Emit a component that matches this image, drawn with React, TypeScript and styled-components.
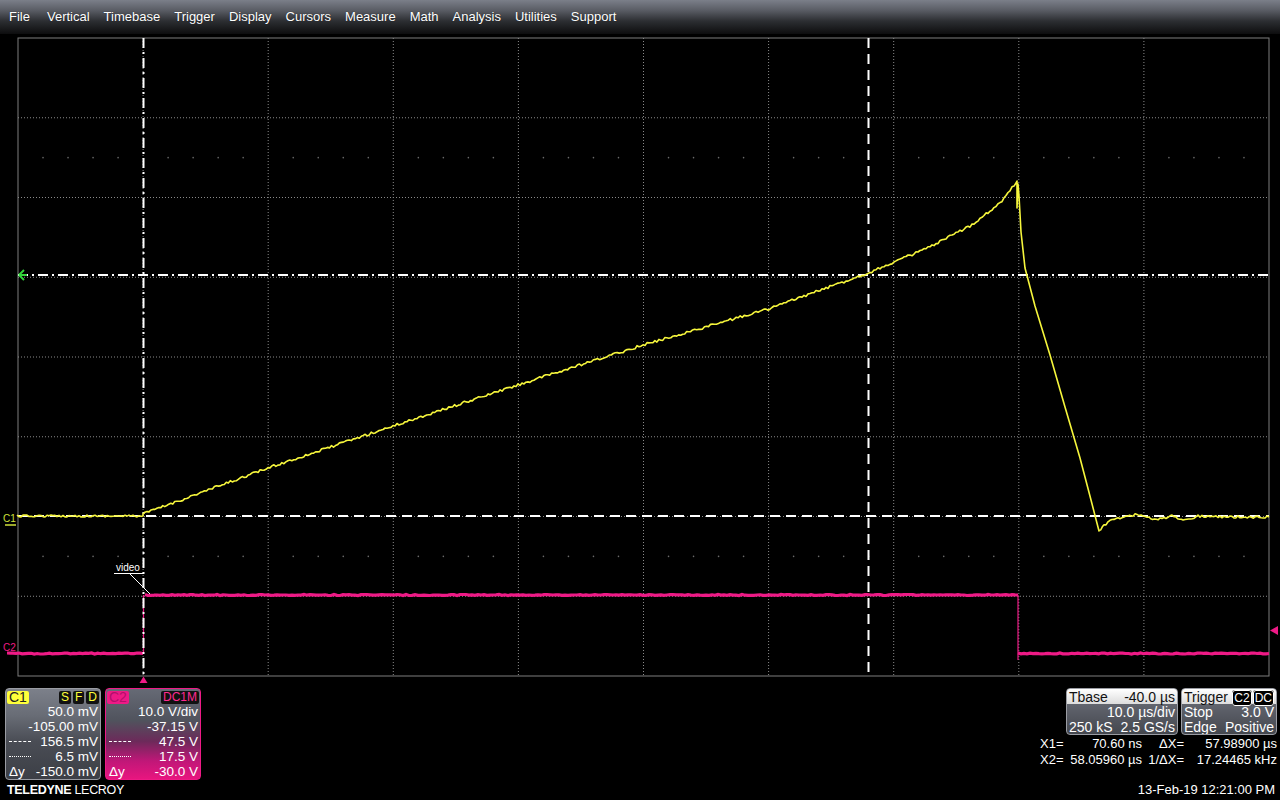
import React from 'react'
import styled, { createGlobalStyle } from 'styled-components'

const GlobalStyle = createGlobalStyle`
  html, body {
    margin: 0;
    padding: 0;
    background: #000;
  }
`

const C1 = '#f6f63c'
const C2 = '#ee1a86'

const Page = styled.div`
  width: 1280px;
  height: 800px;
  background: #000;
  display: flex;
  flex-direction: column;
  overflow: hidden;
  font-family: 'Liberation Sans', Arial, sans-serif;
  color: #fff;
`

const MenuBar = styled.div`
  height: 34px;
  flex-shrink: 0;
  display: flex;
  align-items: center;
  gap: 14px;
  padding: 0 0 1px 9px;
  box-sizing: border-box;
  background: linear-gradient(180deg, #7b7f89 0%, #5a5d65 30%, #2c2e32 62%, #0d0d0e 100%);
  font-size: 13px;
`

const MenuItem = styled.span`
  color: #fff;
  text-shadow: 0 0 1px rgba(0, 0, 0, 0.6);
  &:first-child {
    margin-right: 3px;
  }
`

const Screen = styled.svg`
  display: block;
  flex-shrink: 0;
  width: 1280px;
  height: 650px;
`

const BottomBar = styled.div`
  flex: 1;
  display: flex;
  justify-content: space-between;
  padding: 4px 3px 0 5px;
`

const LeftGroup = styled.div`
  display: flex;
  flex-direction: column;
`

const ChannelRow = styled.div`
  display: flex;
  gap: 4px;
`

const ChannelBox = styled.div<{ $ch: 'c1' | 'c2' }>`
  width: 96px;
  height: 92px;
  box-sizing: border-box;
  border-radius: 4px;
  border: 1px solid ${p => (p.$ch === 'c1' ? '#9a9ca3' : C2)};
  background: ${p =>
    p.$ch === 'c1'
      ? 'linear-gradient(180deg, #7c808a 0%, #686c75 30%, #4a4d55 58%, #3c3f46 100%)'
      : 'linear-gradient(180deg, #666a75 0%, #50535d 35%, #6c2a5a 58%, #c01778 80%, #e8157f 100%)'};
  overflow: hidden;
  display: flex;
  flex-direction: column;
`

const BoxHeader = styled.div`
  height: 15px;
  display: flex;
  align-items: center;
  justify-content: space-between;
  padding: 1px 1px 0 1px;
`

const Tag = styled.span<{ $bg: string; $fg: string; $size?: number }>`
  background: ${p => p.$bg};
  color: ${p => p.$fg};
  font-size: ${p => p.$size ?? 14}px;
  line-height: 13px;
  padding: 0 2px;
  border-radius: 2px;
`

const TagGroup = styled.div`
  display: flex;
  gap: 2px;
`

const ValueRow = styled.div`
  height: 15.5px;
  display: flex;
  align-items: center;
  justify-content: space-between;
  padding: 0 2px 0 3px;
  font-size: 13.5px;
  line-height: 15px;
`

const LineKey = styled.span<{ $kind: 'dashed' | 'dotted' }>`
  display: inline-block;
  width: 22px;
  height: 0;
  border-top: 1px ${p => p.$kind} #fff;
`

const Logo = styled.div`
  margin-top: 3px;
  margin-left: 2px;
  font-size: 12.5px;
  letter-spacing: -0.3px;
  color: #fff;
  b {
    font-weight: 700;
  }
`

const RightGroup = styled.div`
  display: flex;
  flex-direction: column;
  align-items: flex-end;
`

const InfoRow = styled.div`
  display: flex;
  gap: 3px;
`

const InfoBox = styled.div<{ $w: number }>`
  width: ${p => p.$w}px;
  height: 47px;
  box-sizing: border-box;
  border: 1px solid #9a9ca3;
  border-radius: 4px;
  overflow: hidden;
  background: linear-gradient(180deg, #72767f 0%, #5a5d66 50%, #44474e 100%);
`

const InfoHeader = styled.div`
  height: 15px;
  display: flex;
  align-items: center;
  justify-content: space-between;
  padding: 0 2px;
  background: linear-gradient(180deg, #ffffff 0%, #dcdcdc 100%);
  color: #111;
  font-size: 14px;
`

const InfoLine = styled.div<{ $end?: boolean }>`
  height: 15.5px;
  display: flex;
  align-items: center;
  justify-content: ${p => (p.$end ? 'flex-end' : 'space-between')};
  padding: 0 2px;
  font-size: 14px;
`

const SrcTag = styled.span`
  background: #000;
  color: #fff;
  border: 1px solid #fff;
  border-radius: 3px;
  font-size: 12px;
  line-height: 11px;
  padding: 0 1px;
  margin-left: 1px;
`

const Readouts = styled.div`
  margin-top: 1px;
  display: grid;
  grid-template-columns: 20px 82px 42px 93px;
  font-size: 13px;
  line-height: 16px;
  span:nth-child(2n) {
    text-align: right;
  }
  span:nth-child(4n + 3) {
    text-align: right;
  }
`

const DateText = styled.div`
  margin-top: 14px;
  margin-right: 2px;
  font-size: 13px;
`

/* ---------- trace data ---------- */

function rng(seed: number) {
  let s = seed
  return () => {
    s = (s * 16807) % 2147483647
    return (s - 1) / 2147483646
  }
}

function interp(points: [number, number][], step: number, noise: number, r: () => number) {
  const out: string[] = []
  for (let i = 0; i < points.length - 1; i++) {
    const [x0, y0] = points[i]
    const [x1, y1] = points[i + 1]
    const n = Math.max(1, Math.round((x1 - x0) / step))
    for (let k = 0; k < n; k++) {
      const t = k / n
      const x = x0 + (x1 - x0) * t
      const y = y0 + (y1 - y0) * t + (r() - 0.5) * noise
      out.push(`${x.toFixed(1)},${y.toFixed(1)}`)
    }
  }
  const last = points[points.length - 1]
  out.push(`${last[0]},${last[1]}`)
  return out
}

function buildC1() {
  const r = rng(12345)
  const pre = interp([[17, 516], [143, 516]], 2, 2, r)
  const ramp = interp(
    [
      [143, 514], [268, 468], [393, 426], [518, 385], [643, 345], [768, 309],
      [868, 273], [930, 247], [970, 226], [1000, 203], [1016, 183],
    ],
    2,
    2.6,
    r,
  )
  const fall = [
    '1017,181', '1017,208', '1018,184', '1019,196', '1021,232', '1025,268',
    '1035,306', '1050,355', '1065,407', '1080,458', '1091,500', '1099,531',
  ]
  const settle = interp(
    [
      [1099, 531], [1104, 525], [1112, 520], [1124, 517], [1137, 514], [1147, 518],
      [1160, 519], [1172, 516], [1185, 520], [1198, 516], [1230, 517], [1269, 517],
    ],
    2,
    2.4,
    r,
  )
  return [...pre, ...ramp, ...fall, ...settle].join(' ')
}

function buildLevel(x0: number, x1: number, y: number, seed: number) {
  const r = rng(seed)
  return interp([[x0, y], [x1, y]], 3, 1, r).join(' ')
}

const c1Points = buildC1()
const c2Low1 = buildLevel(7, 143, 653.5, 77)
const c2High = buildLevel(145, 1018, 595, 91)
const c2Low2 = buildLevel(1018, 1269, 653.5, 113)

const GX0 = 18
const GX1 = 1269
const GY0 = 38
const GY1 = 676
const DX = (GX1 - GX0) / 10
const DY = (GY1 - GY0) / 8

const menu = ['File', 'Vertical', 'Timebase', 'Trigger', 'Display', 'Cursors', 'Measure', 'Math', 'Analysis', 'Utilities', 'Support']

function Graticule() {
  const dots: React.ReactNode[] = []
  ;[1.5, 6.5].forEach(row => {
    for (let k = 1; k < 50; k++) {
      if (k % 5 === 0) continue
      dots.push(
        <circle key={`${row}-${k}`} cx={GX0 + (k * DX) / 5} cy={GY0 + row * DY} r={0.8} fill="#6a6a6a" />,
      )
    }
  })
  return (
    <g>
      <rect x={GX0} y={GY0} width={GX1 - GX0} height={GY1 - GY0} fill="none" stroke="#7e7e7e" strokeWidth={1} />
      {Array.from({ length: 9 }, (_, i) => (
        <line
          key={`v${i}`}
          x1={GX0 + (i + 1) * DX}
          x2={GX0 + (i + 1) * DX}
          y1={GY0}
          y2={GY1}
          stroke="#8a8a8a"
          strokeWidth={1}
          strokeDasharray="1 2"
        />
      ))}
      {Array.from({ length: 7 }, (_, j) => (
        <line
          key={`h${j}`}
          x1={GX0}
          x2={GX1}
          y1={GY0 + (j + 1) * DY}
          y2={GY0 + (j + 1) * DY}
          stroke="#8a8a8a"
          strokeWidth={1}
          strokeDasharray="1 2"
        />
      ))}
      {dots}
    </g>
  )
}

function Cursors() {
  return (
    <g stroke="#fff" strokeWidth={2} fill="none">
      <line x1={143.5} x2={143.5} y1={GY0} y2={GY1} strokeDasharray="10 4 2 4" />
      <line x1={868.5} x2={868.5} y1={GY0} y2={GY1} strokeDasharray="10 6" />
      <line x1={GX0} x2={GX1} y1={275} y2={275} strokeDasharray="10 4 2 4" />
      <line x1={GX0} x2={GX1} y1={516} y2={516} strokeDasharray="10 6" />
    </g>
  )
}

function Markers() {
  return (
    <g fontFamily="'Liberation Sans', Arial, sans-serif">
      <path d="M19 275 L24 270 M19 275 L24 280 M19 275 H27" stroke="#33d43a" strokeWidth={2} fill="none" />
      <text x={3} y={522} fontSize={10} fill="#cfe03a">C1</text>
      <line x1={5} x2={16} y1={525} y2={525} stroke="#cfe03a" strokeWidth={1.5} />
      <text x={3} y={651} fontSize={10} fill={C2}>C2</text>
      <text x={116} y={571} fontSize={10} fill="#fff">video</text>
      <line x1={114} x2={143} y1={573.5} y2={573.5} stroke="#fff" strokeWidth={1} />
      <line x1={130} x2={150} y1={574} y2={594} stroke="#fff" strokeWidth={1} />
      <polygon points="139.5,683 143.5,676.5 147.5,683" fill={C2} />
      <polygon points="1270,630.5 1278,626 1278,635" fill={C2} />
    </g>
  )
}

export default function App() {
  return (
    <Page>
      <GlobalStyle />
      <MenuBar>
        {menu.map(m => (
          <MenuItem key={m}>{m}</MenuItem>
        ))}
      </MenuBar>

      <Screen viewBox="0 34 1280 650">
        <Graticule />
        <g stroke={C2} fill="none">
          <polyline points={c2Low1} strokeWidth={3.2} />
          <polyline points={c2High} strokeWidth={3.2} />
          <polyline points={c2Low2} strokeWidth={3.2} />
          <line x1={143.5} x2={143.5} y1={595} y2={654} strokeWidth={1.2} />
          <line x1={1018} x2={1018} y1={595} y2={660} strokeWidth={1.2} />
        </g>
        <Cursors />
        <polyline points={c1Points} stroke={C1} strokeWidth={1.6} fill="none" strokeLinejoin="round" />
        <Markers />
      </Screen>

      <BottomBar>
        <LeftGroup>
          <ChannelRow>
            <ChannelBox $ch="c1">
              <BoxHeader>
                <Tag $bg="#ffff3a" $fg="#222">C1</Tag>
                <TagGroup>
                  <Tag $bg="#111" $fg="#ffff3a" $size={12}>S</Tag>
                  <Tag $bg="#111" $fg="#ffff3a" $size={12}>F</Tag>
                  <Tag $bg="#111" $fg="#ffff3a" $size={12}>D</Tag>
                </TagGroup>
              </BoxHeader>
              <ValueRow><span /><span>50.0 mV</span></ValueRow>
              <ValueRow><span /><span>-105.00 mV</span></ValueRow>
              <ValueRow><LineKey $kind="dashed" /><span>156.5 mV</span></ValueRow>
              <ValueRow><LineKey $kind="dotted" /><span>6.5 mV</span></ValueRow>
              <ValueRow><span>Δy</span><span>-150.0 mV</span></ValueRow>
            </ChannelBox>
            <ChannelBox $ch="c2">
              <BoxHeader>
                <Tag $bg="#ee1a86" $fg="#b3106a">C2</Tag>
                <Tag $bg="#111" $fg="#ff2a92" $size={12}>DC1M</Tag>
              </BoxHeader>
              <ValueRow><span /><span>10.0 V/div</span></ValueRow>
              <ValueRow><span /><span>-37.15 V</span></ValueRow>
              <ValueRow><LineKey $kind="dashed" /><span>47.5 V</span></ValueRow>
              <ValueRow><LineKey $kind="dotted" /><span>17.5 V</span></ValueRow>
              <ValueRow><span>Δy</span><span>-30.0 V</span></ValueRow>
            </ChannelBox>
          </ChannelRow>
          <Logo>
            <b>TELEDYNE</b> LECROY
          </Logo>
        </LeftGroup>

        <RightGroup>
          <InfoRow>
            <InfoBox $w={112}>
              <InfoHeader>
                <span>Tbase</span>
                <span>-40.0 µs</span>
              </InfoHeader>
              <InfoLine $end>10.0 µs/div</InfoLine>
              <InfoLine>
                <span>250 kS</span>
                <span>2.5 GS/s</span>
              </InfoLine>
            </InfoBox>
            <InfoBox $w={96}>
              <InfoHeader>
                <span>Trigger</span>
                <span>
                  <SrcTag>C2</SrcTag>
                  <SrcTag>DC</SrcTag>
                </span>
              </InfoHeader>
              <InfoLine>
                <span>Stop</span>
                <span>3.0 V</span>
              </InfoLine>
              <InfoLine>
                <span>Edge</span>
                <span>Positive</span>
              </InfoLine>
            </InfoBox>
          </InfoRow>
          <Readouts>
            <span>X1=</span>
            <span>70.60 ns</span>
            <span>ΔX=</span>
            <span>57.98900 µs</span>
            <span>X2=</span>
            <span>58.05960 µs</span>
            <span>1/ΔX=</span>
            <span>17.24465 kHz</span>
          </Readouts>
          <DateText>13-Feb-19 12:21:00 PM</DateText>
        </RightGroup>
      </BottomBar>
    </Page>
  )
}
